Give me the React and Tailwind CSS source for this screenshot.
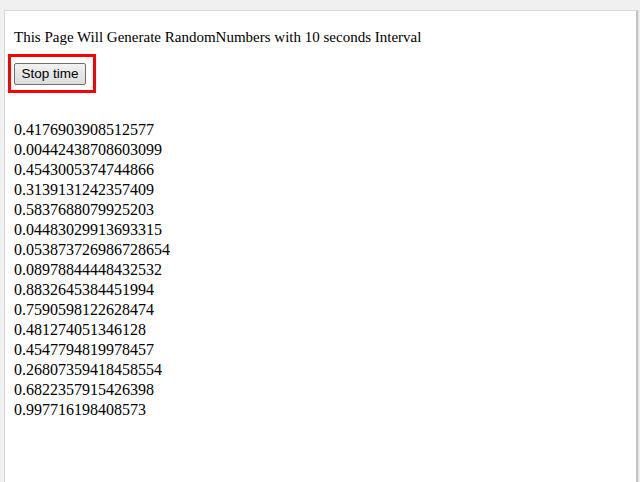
const numbers = [
  '0.4176903908512577',
  '0.00442438708603099',
  '0.4543005374744866',
  '0.3139131242357409',
  '0.5837688079925203',
  '0.04483029913693315',
  '0.053873726986728654',
  '0.08978844448432532',
  '0.8832645384451994',
  '0.7590598122628474',
  '0.481274051346128',
  '0.4547794819978457',
  '0.26807359418458554',
  '0.6822357915426398',
  '0.997716198408573',
];

export default function App() {
  return (
    <div className="w-[640px] h-[482px] bg-[#f0f0f0] overflow-hidden pt-[10px] pl-[4px]">
      <div className="w-[634px] h-[472px] bg-white border-l border-t border-[#d8d8d8] border-r-[2px] border-r-[#c4c4c4] shadow-[1px_0_0_#e2e2e2] pl-[3px] pt-[16px] font-['Liberation_Serif',serif] text-[16px] leading-[20px] text-black">
        <p className="pl-[6px] text-[15px]">This Page Will Generate RandomNumbers with 10 seconds Interval</p>

        {/* highlighted stop button */}
        <div className="mt-[7px] w-[88px] h-[39px] border-[3px] border-[#ff0000] pl-[3px] pt-[6px]">
          <button className="w-[72px] h-[22px] border border-[#707070] rounded-[2px] bg-gradient-to-b from-[#f2f2f2] to-[#dcdcdc] font-['Liberation_Sans',sans-serif] text-[13.5px] leading-[20px] text-black">
            Stop time
          </button>
        </div>

        <div className="mt-[27px] pl-[6px]">
          {numbers.map((n) => (
            <div key={n}>{n}</div>
          ))}
        </div>
      </div>
    </div>
  );
}
